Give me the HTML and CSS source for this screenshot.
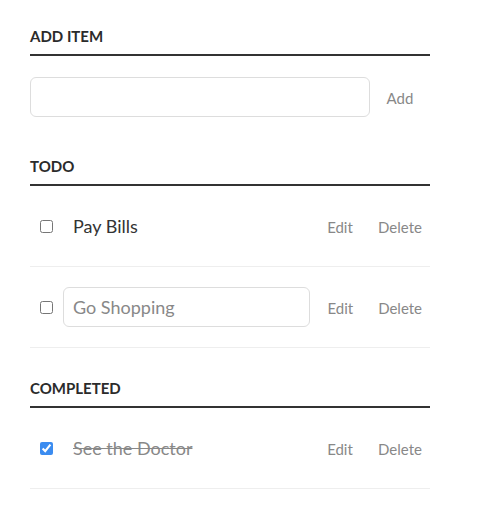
FILE: index.html
```html
<!DOCTYPE html>
<html>
<head>
<meta charset="utf-8">
<link rel="stylesheet" href="styles.css">
</head>
<body>
<div class="container">
  <h3 class="section-title">Add Item</h3>
  <div class="add-row">
    <input class="new-task" type="text">
    <button class="btn">Add</button>
  </div>

  <h3 class="section-title todo-title">Todo</h3>
  <ul class="task-list">
    <li class="task">
      <input class="check" type="checkbox">
      <label class="task-label">Pay Bills</label>
      <button class="btn">Edit</button>
      <button class="btn">Delete</button>
    </li>
    <li class="task">
      <input class="check" type="checkbox">
      <input class="edit-input" type="text" value="Go Shopping">
      <button class="btn">Edit</button>
      <button class="btn">Delete</button>
    </li>
  </ul>

  <h3 class="section-title completed-title">Completed</h3>
  <ul class="task-list">
    <li class="task">
      <input class="check" type="checkbox" checked>
      <label class="task-label done">See the Doctor</label>
      <button class="btn">Edit</button>
      <button class="btn">Delete</button>
    </li>
  </ul>
</div>
</body>
</html>
```

FILE: styles.css
```css
html, body {
  margin: 0;
  padding: 0;
  background: #fff;
}

body {
  font-family: Lato, "Open Sans", sans-serif;
  color: #333;
}

.container {
  width: 400px;
  margin-left: 30px;
  padding-top: 28px;
}

.section-title {
  margin: 0;
  padding: 0 0 9px;
  font-size: 15px;
  line-height: 17px;
  font-weight: 700;
  text-transform: uppercase;
  color: #2b2b2b;
  border-bottom: 2px solid #333;
}

.todo-title {
  margin-top: 41px;
}

.completed-title {
  margin-top: 32px;
}

.add-row {
  display: flex;
  align-items: center;
  margin-top: 21px;
}

input[type="text"] {
  box-sizing: border-box;
  height: 40px;
  margin: 0;
  padding: 0 9px;
  border: 1px solid #ddd;
  border-radius: 6px;
  background: #fff;
  font-family: Lato, "Open Sans", sans-serif;
  font-size: 18px;
  color: #888;
  outline: none;
}

.new-task {
  width: 340px;
}

.btn {
  width: 60px;
  padding: 2px 0 0;
  border: 0;
  background: none;
  font-family: Lato, "Open Sans", sans-serif;
  font-size: 15px;
  color: #888;
  text-align: center;
  cursor: pointer;
}

.task-list {
  margin: 0;
  padding: 0;
  list-style: none;
}

.task {
  display: flex;
  align-items: center;
  height: 40px;
  padding: 20px 0;
  border-bottom: 1px solid #eee;
}

.check {
  width: 13px;
  height: 13px;
  margin: 0 10px;
  flex: none;
  accent-color: #3b8cf0;
}

.task-label {
  flex: 1;
  padding-left: 10px;
  font-size: 18px;
  line-height: 40px;
  color: #333;
}

.task-label.done {
  color: #888;
  text-decoration: line-through;
}

.edit-input {
  width: 248px;
  margin-right: 0;
}
```
